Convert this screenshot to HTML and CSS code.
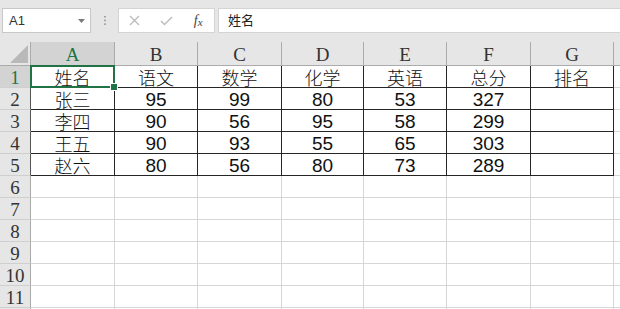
FILE: index.html
```html
<!DOCTYPE html>
<html lang="zh-CN">
<head>
    <meta charset="UTF-8">
    <meta name="viewport" content="width=device-width, initial-scale=1.0">
    <title>成绩表</title>
    <link rel="stylesheet" href="styles.css">
</head>
<body>
    <div class="toolbar">
        <div class="namebox">
            <span>A1</span>
            <svg width="7" height="4" viewBox="0 0 7 4"><path d="M0 0H7L3.5 4Z" fill="#7a7a7a"/></svg>
        </div>
        <div class="grip">
            <svg width="2" height="9" viewBox="0 0 2 9"><rect x="0" y="0" width="2" height="1.5" fill="#a0a0a0"/><rect x="0" y="3.7" width="2" height="1.5" fill="#a0a0a0"/><rect x="0" y="7.4" width="2" height="1.5" fill="#a0a0a0"/></svg>
        </div>
        <div class="fbuttons">
            <span class="fbtn"><svg width="11" height="11" viewBox="0 0 11 11"><path d="M1 1L10 10M10 1L1 10" stroke="#bdbdbd" stroke-width="1.4" fill="none"/></svg></span>
            <span class="fbtn"><svg width="13" height="10" viewBox="0 0 13 10"><path d="M1 5L4.5 8.5L12 1" stroke="#bdbdbd" stroke-width="1.5" fill="none"/></svg></span>
            <span class="fbtn fx"><i>f</i><i class="x">x</i></span>
        </div>
        <div class="formula">姓名</div>
    </div>

    <table class="sheet">
        <colgroup>
            <col style="width:31px">
            <col style="width:84px">
            <col style="width:83px">
            <col style="width:84px">
            <col style="width:82px">
            <col style="width:83px">
            <col style="width:84px">
            <col style="width:83px">
            <col style="width:83px">
        </colgroup>
        <thead>
            <tr>
                <th class="corner"><svg width="18" height="18" viewBox="0 0 18 18"><path d="M18 0V18H0Z" fill="#b9b9b9"/></svg></th>
                <th class="sel">A</th>
                <th>B</th>
                <th>C</th>
                <th>D</th>
                <th>E</th>
                <th>F</th>
                <th>G</th>
                <th></th>
            </tr>
        </thead>
        <tbody>
            <tr>
                <th class="edge sel">1</th>
                <td class="d cn active">姓名</td>
                <td class="d cn">语文</td>
                <td class="d cn">数学</td>
                <td class="d cn">化学</td>
                <td class="d cn">英语</td>
                <td class="d cn">总分</td>
                <td class="d cn">排名</td>
                <td></td>
            </tr>
            <tr>
                <th class="edge">2</th>
                <td class="d cn">张三</td>
                <td class="d">95</td>
                <td class="d">99</td>
                <td class="d">80</td>
                <td class="d">53</td>
                <td class="d">327</td>
                <td class="d"></td>
                <td></td>
            </tr>
            <tr>
                <th class="edge">3</th>
                <td class="d cn">李四</td>
                <td class="d">90</td>
                <td class="d">56</td>
                <td class="d">95</td>
                <td class="d">58</td>
                <td class="d">299</td>
                <td class="d"></td>
                <td></td>
            </tr>
            <tr>
                <th class="edge">4</th>
                <td class="d cn">王五</td>
                <td class="d">90</td>
                <td class="d">93</td>
                <td class="d">55</td>
                <td class="d">65</td>
                <td class="d">303</td>
                <td class="d"></td>
                <td></td>
            </tr>
            <tr>
                <th class="edge">5</th>
                <td class="d cn">赵六</td>
                <td class="d">80</td>
                <td class="d">56</td>
                <td class="d">80</td>
                <td class="d">73</td>
                <td class="d">289</td>
                <td class="d"></td>
                <td></td>
            </tr>
            <tr><th>6</th><td></td><td></td><td></td><td></td><td></td><td></td><td></td><td></td></tr>
            <tr><th>7</th><td></td><td></td><td></td><td></td><td></td><td></td><td></td><td></td></tr>
            <tr><th>8</th><td></td><td></td><td></td><td></td><td></td><td></td><td></td><td></td></tr>
            <tr><th>9</th><td></td><td></td><td></td><td></td><td></td><td></td><td></td><td></td></tr>
            <tr><th>10</th><td></td><td></td><td></td><td></td><td></td><td></td><td></td><td></td></tr>
            <tr><th>11</th><td></td><td></td><td></td><td></td><td></td><td></td><td></td><td></td></tr>
            <tr><th></th><td></td><td></td><td></td><td></td><td></td><td></td><td></td><td></td></tr>
        </tbody>
    </table>
</body>
</html>
```

FILE: styles.css
```css
* {
    box-sizing: border-box;
}
body {
    margin: 0;
    width: 620px;
    height: 309px;
    overflow: hidden;
    background: #fff;
    font-family: "Liberation Sans", "Noto Sans CJK SC", sans-serif;
}
.toolbar {
    height: 42px;
    background: #e6e6e6;
    display: flex;
    align-items: flex-start;
    padding: 8px 0 0 2px;
    width: 620px;
}
.namebox {
    width: 89px;
    height: 25px;
    background: #fff;
    border: 1px solid #c8c8c8;
    display: flex;
    align-items: center;
    justify-content: space-between;
    padding: 0 5px 0 6px;
    font-size: 13px;
    color: #333;
    flex: none;
}
.grip {
    width: 27px;
    height: 25px;
    display: flex;
    align-items: center;
    justify-content: center;
    flex: none;
}
.fbuttons {
    width: 97px;
    height: 25px;
    background: #fff;
    border: 1px solid #d4d4d4;
    display: flex;
    align-items: center;
    flex: none;
}
.fbtn {
    width: 32px;
    display: flex;
    justify-content: center;
    align-items: center;
}
.fx {
    font-family: "Liberation Serif", serif;
    font-size: 14px;
    color: #444;
}
.fx .x {
    font-size: 11px;
    margin-top: 3px;
}
.formula {
    flex: 1;
    height: 25px;
    margin-left: 3px;
    background: #fff;
    border: 1px solid #d4d4d4;
    border-right: none;
    padding-left: 9px;
    font-family: "Noto Sans CJK SC", sans-serif;
    font-size: 13px;
    line-height: 22px;
    color: #222;
}

/* sheet grid */
.sheet {
    border-collapse: separate;
    border-spacing: 0;
    table-layout: fixed;
    width: 697px;
}
.sheet th {
    background: #e6e6e6;
    font-family: "Liberation Serif", serif;
    font-weight: normal;
    font-size: 19px;
    color: #333;
    padding: 0;
    text-align: center;
}
.sheet thead tr {
    height: 24px;
}
.sheet thead th {
    border-right: 1px solid #ababab;
    border-bottom: 1px solid #ababab;
    line-height: 19px;
    padding-top: 2px;
}
.sheet tbody tr {
    height: 22px;
}
.sheet tbody th {
    border-right: 1px solid #ababab;
    border-bottom: 1px solid #cfcfcf;
    line-height: 18px;
    padding-top: 2px;
}
.sheet tbody th.edge {
    border-right-color: #555;
}
.sheet th.sel {
    background: #d3d3d3;
    color: #217346;
}
.sheet th.corner {
    text-align: right;
    vertical-align: bottom;
    padding: 0 2px 2px 0;
    line-height: 0;
}
.sheet td {
    border-right: 1px solid #d6d6d6;
    border-bottom: 1px solid #d6d6d6;
    padding: 2px 0 0;
    text-align: center;
    font-size: 19px;
    line-height: 18px;
    color: #111;
}
.sheet td.d {
    border-color: #262626;
}
.sheet td.cn {
    font-family: "Noto Sans CJK SC", sans-serif;
    font-weight: 300;
    font-size: 18px;
    padding-top: 0;
    line-height: 20px;
}
.sheet td.active {
    position: relative;
}
.sheet td.active::before {
    content: "";
    position: absolute;
    left: -1px;
    top: -1px;
    right: -1px;
    bottom: -1px;
    border: 2px solid #217346;
}
.sheet td.active::after {
    content: "";
    position: absolute;
    right: -4px;
    bottom: -4px;
    width: 6px;
    height: 6px;
    background: #217346;
    border: 1px solid #fff;
}
```
